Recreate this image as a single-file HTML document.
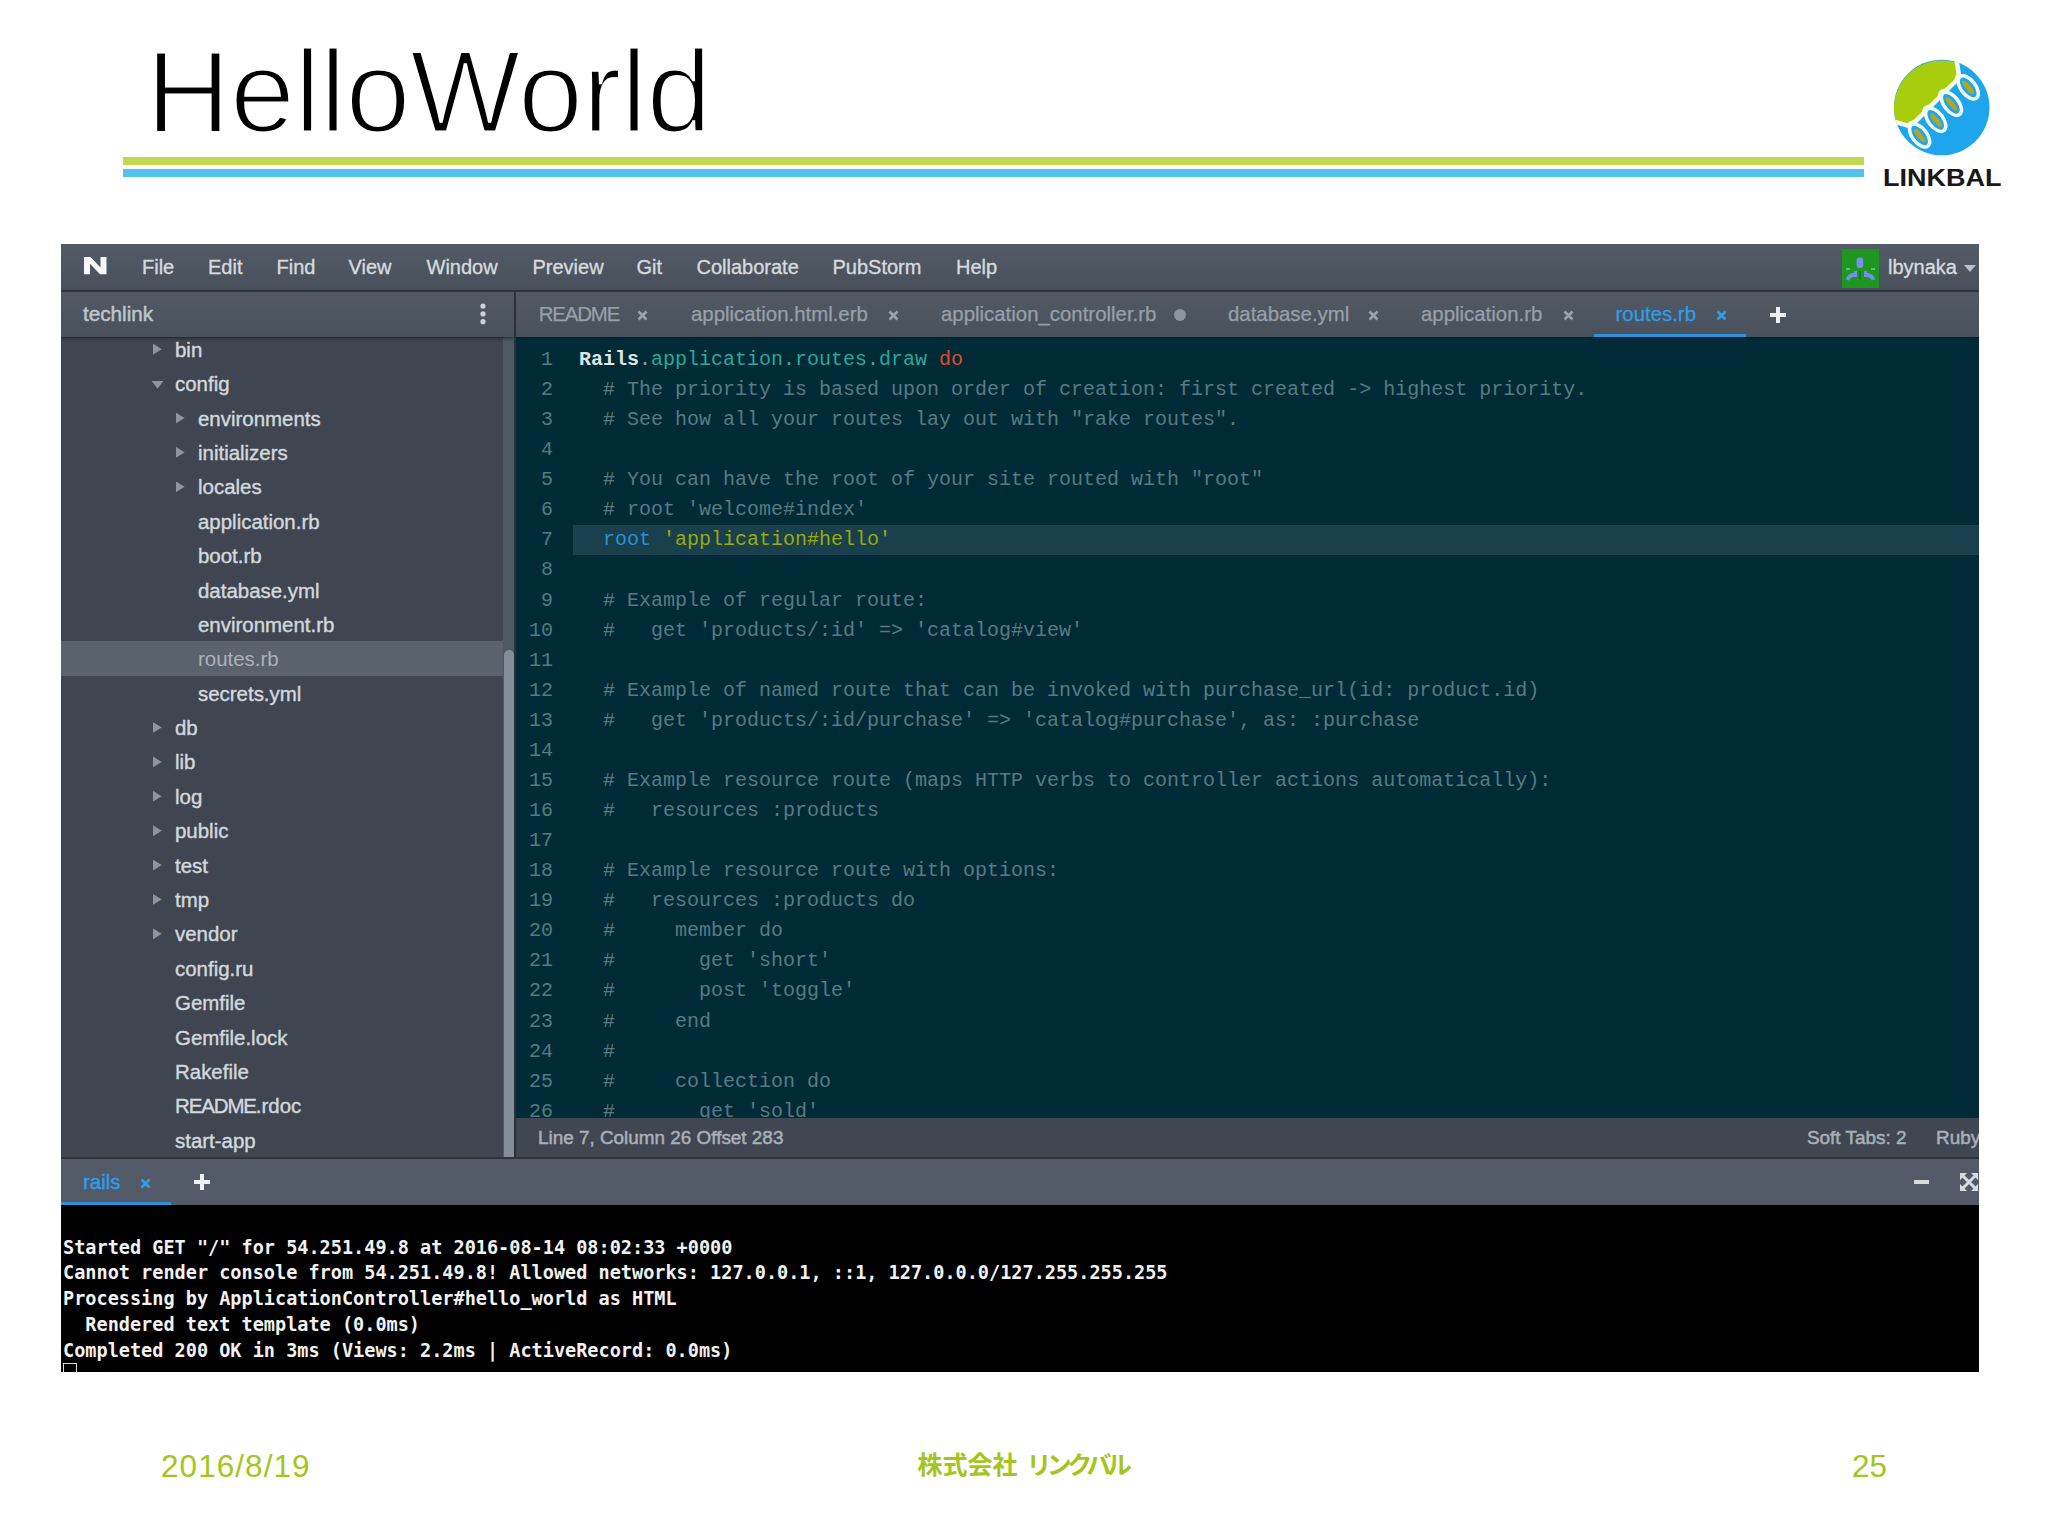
<!DOCTYPE html>
<html lang="ja">
<head>
<meta charset="utf-8">
<title>HelloWorld</title>
<style>
*{margin:0;padding:0;box-sizing:border-box}
html,body{width:2048px;height:1536px;background:#fff;overflow:hidden}
body{position:relative;font-family:"Liberation Sans",sans-serif}
.abs{position:absolute}
#title{position:absolute;left:146px;top:27px;font-size:117px;line-height:130px;color:#000;letter-spacing:-0.5px;white-space:nowrap;-webkit-text-stroke:3.1px #fff}
#gline{position:absolute;left:123px;top:157px;width:1741px;height:8px;background:#c4d94f}
#bline{position:absolute;left:123px;top:169px;width:1741px;height:8px;background:#50c2ee}
#logo{position:absolute;left:1870px;top:50px}
#fdate{position:absolute;left:161px;top:1448px;font-size:31.5px;line-height:36px;color:#a4c51c;letter-spacing:1.05px;white-space:nowrap}
#fco{position:absolute;left:917.5px;top:1447px;font-size:25px;line-height:36px;color:#a4c51c;font-weight:bold;white-space:nowrap;font-family:"Liberation Sans","Noto Sans CJK JP",sans-serif}
#fco .kt{letter-spacing:-4.6px}
#fco .sp{letter-spacing:2px}
#fnum{position:absolute;left:1852px;top:1448px;font-size:31.5px;line-height:36px;color:#a4c51c;white-space:nowrap}

/* IDE */
#ide{position:absolute;left:61px;top:244px;width:1918px;height:1128px;background:#3f4651;overflow:hidden;color:#d4d9de;box-shadow:inset 1px 1px 0 rgba(30,34,40,.55)}
#menubar{position:absolute;left:0;top:0;width:1918px;height:46px;background:linear-gradient(#525b66,#48505b)}
#menubar .mi{position:absolute;top:11px;font-size:20px;line-height:24px;color:#d6dade;white-space:nowrap;-webkit-text-stroke:0.35px #d6dade}
#mline{position:absolute;left:0;top:46px;width:1918px;height:2px;background:#30353d}
#sidehead{position:absolute;left:0;top:48px;width:454px;height:45px;background:linear-gradient(#505964,#49515c)}
#sidehead span{position:absolute;left:22px;top:10px;font-size:20.7px;line-height:24px;color:#bec5cd;-webkit-text-stroke:0.5px #bec5cd}
#vdiv{position:absolute;left:453.3px;top:47px;width:1.7px;height:867px;background:#2c3139;z-index:4}
#tabbar{position:absolute;left:455px;top:48px;width:1463px;height:45px;background:linear-gradient(#505964,#49515c)}
.tab{position:absolute;top:10px;font-size:20.4px;-webkit-text-stroke:0.25px #97a0aa;line-height:24px;color:#97a0aa;white-space:nowrap}
.tab.act{color:#2f9ee8;-webkit-text-stroke:0.25px #2f9ee8}
.tx{position:absolute;top:18px;stroke:#9aa2ac;stroke-width:2.6;fill:none}
.tx.act{stroke:#2f9ee8}
.dot{position:absolute;top:17px;width:12px;height:12px;border-radius:50%;background:#8c949e}
#tabul{position:absolute;left:1078px;top:41.5px;width:152px;height:3.5px;background:#2b93dc}
#hline{position:absolute;left:0;top:92.6px;width:1918px;height:1.4px;background:rgba(10,14,20,.45);z-index:3}
#hshadow{position:absolute;left:0;top:94px;width:454px;height:4px;background:linear-gradient(rgba(0,0,0,.22),rgba(0,0,0,0));z-index:3}
#tree{position:absolute;left:0;top:93px;width:442px;height:821px;background:#3f4651;overflow:hidden}
.trow{position:absolute;left:0;width:442px;height:34.4px}
.trow.sel{background:#5a626d}
.trow span{position:absolute;top:6px;font-size:20.45px;line-height:24px;color:#d3d8dd;white-space:nowrap;-webkit-text-stroke:0.4px #d3d8dd}
.trow.sel span{color:#aab1ba;-webkit-text-stroke:0}
.ar{position:absolute;top:11.8px;width:9px;height:11.2px;background:#8d95a0;clip-path:polygon(0 0,100% 50%,0 100%)}
.ad{position:absolute;top:14.6px;margin-left:0.5px;width:12px;height:8px;background:#8d95a0;clip-path:polygon(0 0,100% 0,50% 100%)}
#strack{position:absolute;left:442px;top:93px;width:12px;height:821px;background:#4f5964}
#sthumb{position:absolute;left:443px;top:406px;width:10px;height:508px;background:#848e9b;border-radius:5px 5px 0 0}
#editor{position:absolute;left:455px;top:93px;width:1463px;height:781px;background:#002b36;overflow:hidden;font-family:"Liberation Mono",monospace}
.cl{position:absolute;left:0;width:1463px;height:30px;font-size:20px;line-height:30px;white-space:pre}
.cl.act .ct{background:#1a3f4d}
.ln{position:absolute;left:0;width:37px;text-align:right;color:#4f7c86}
.ct{position:absolute;left:57px;width:1406px;height:30px;padding-left:6px}
.c{color:#597a83}
.w{color:#dfe5e5;font-weight:bold}
.p{color:#93a1a1}
.t{color:#2aa89c}
.r{color:#e04a30}
.b{color:#2b8fd8}
.g{color:#96ab0c}
#status{position:absolute;left:455px;top:874px;width:1463px;height:39px;background:#404752}
#status span{position:absolute;top:9px;font-size:18.9px;line-height:22px;color:#a9b0b9;white-space:nowrap;-webkit-text-stroke:0.5px #a9b0b9}
#sline{position:absolute;left:0;top:913px;width:1918px;height:2px;background:#30353d}
#ttabs{position:absolute;left:0;top:915px;width:1918px;height:47px;background:#515a66}
#ttabs .rl{position:absolute;left:22px;top:11px;font-size:20.4px;line-height:24px;color:#2f9ee8;-webkit-text-stroke:0.4px #2f9ee8}
#ttul{position:absolute;left:0;top:42.5px;width:110px;height:4px;background:#2b93dc}
#term{position:absolute;left:0;top:961px;width:1918px;height:167px;background:#000;overflow:hidden;font-family:"DejaVu Sans Mono","Liberation Mono",monospace}
.tl{position:absolute;left:2px;font-size:18.55px;line-height:26px;color:#f2f2f2;font-weight:bold;white-space:pre}
#cursor{position:absolute;left:1.5px;top:157.5px;width:14px;height:20px;border:1.5px solid #ddd}
</style>
</head>
<body>
<div id="title">HelloWorld</div>
<div id="gline"></div>
<div id="bline"></div>

<svg id="logo" width="178" height="150" viewBox="0 0 178 150">
<defs><clipPath id="lc"><circle cx="71.7" cy="57.5" r="47.8"/></clipPath><clipPath id="lg"><path d="M86.5 10L20 10L20 72L40.5 77.5L90.5 27Z"/></clipPath></defs>
<g clip-path="url(#lc)">
<rect x="20" y="5" width="104" height="104" fill="#1da6ee"/>
<path d="M86.5 12.9A47.8 47.8 0 0 0 25.9 72L40.5 76.3L89.3 27.5Z" fill="#a8cd0c"/>
<path d="M22 71L40.5 76.3L89.3 27.5L86.2 8" fill="none" stroke="#f8fdea" stroke-width="4.5" stroke-linejoin="round"/>
<g clip-path="url(#lg)">
<ellipse cx="49.6" cy="85.5" rx="11" ry="17.4" transform="rotate(-38 49.6 85.5)" fill="#f8fdea"/>
<ellipse cx="65.7" cy="69.8" rx="11" ry="17.4" transform="rotate(-38 65.7 69.8)" fill="#f8fdea"/>
<ellipse cx="81.4" cy="53.8" rx="11" ry="17.4" transform="rotate(-38 81.4 53.8)" fill="#f8fdea"/>
<ellipse cx="98.2" cy="37.4" rx="11" ry="17.4" transform="rotate(-38 98.2 37.4)" fill="#f8fdea"/>
</g>
<ellipse cx="49.6" cy="85.5" rx="7.3" ry="13.5" transform="rotate(-38 49.6 85.5)" fill="#1da6ee" stroke="#f4fdf4" stroke-width="3.5"/>
<ellipse cx="49.6" cy="85.5" rx="2.7" ry="8.6" transform="rotate(-40 49.6 85.5)" fill="#b5a522"/>
<ellipse cx="65.7" cy="69.8" rx="7.3" ry="13.5" transform="rotate(-38 65.7 69.8)" fill="#1da6ee" stroke="#f4fdf4" stroke-width="3.5"/>
<ellipse cx="65.7" cy="69.8" rx="2.7" ry="8.6" transform="rotate(-40 65.7 69.8)" fill="#b5a522"/>
<ellipse cx="81.4" cy="53.8" rx="7.3" ry="13.5" transform="rotate(-38 81.4 53.8)" fill="#1da6ee" stroke="#f4fdf4" stroke-width="3.5"/>
<ellipse cx="81.4" cy="53.8" rx="2.7" ry="8.6" transform="rotate(-40 81.4 53.8)" fill="#b5a522"/>
<ellipse cx="98.2" cy="37.4" rx="7.3" ry="13.5" transform="rotate(-38 98.2 37.4)" fill="#1da6ee" stroke="#f4fdf4" stroke-width="3.5"/>
<ellipse cx="98.2" cy="37.4" rx="2.7" ry="8.6" transform="rotate(-40 98.2 37.4)" fill="#b5a522"/>
</g>
<text x="13" y="136" font-family="Liberation Sans, sans-serif" font-weight="bold" font-size="23.2" textLength="118.5" lengthAdjust="spacingAndGlyphs" fill="#1a1718">LINKBAL</text>
</svg>

<div id="ide">
  <div id="menubar">
    <svg class="abs" style="left:23px;top:13px" width="24" height="18" viewBox="0 0 24 18"><path d="M0 0H6.5L16.5 10.5V0H22.5V17.2H16L6 6.7V17.2H0Z" fill="#f6f8fa"/></svg>
<span class="mi" style="left:81.0px">File</span>
<span class="mi" style="left:147.0px">Edit</span>
<span class="mi" style="left:215.5px">Find</span>
<span class="mi" style="left:287.5px">View</span>
<span class="mi" style="left:365.5px">Window</span>
<span class="mi" style="left:471.5px">Preview</span>
<span class="mi" style="left:575.5px">Git</span>
<span class="mi" style="left:635.5px">Collaborate</span>
<span class="mi" style="left:771.5px">PubStorm</span>
<span class="mi" style="left:895.0px">Help</span>
    <svg class="abs" style="left:1780.5px;top:5px;filter:blur(0.7px)" width="37" height="39" viewBox="0 0 37 39"><rect width="37" height="39" fill="#1f9620"/><rect x="14.6" y="8.5" width="6.6" height="10.5" rx="2.5" fill="#7391f2"/><path d="M4 30.5Q4.5 24.5 13.5 23.5V27.5Q8 28 7.5 31.5ZM33 30.5Q32.5 24.5 23.500 23.5V27.5Q29 28 29.500 31.500Z" fill="#6f8ff0"/><rect x="12" y="22" width="3" height="6" fill="#6f8ff0"/><rect x="22" y="22" width="3" height="6" fill="#6f8ff0"/><rect x="4" y="19" width="4" height="2" fill="#5fc070"/><rect x="29" y="19" width="4" height="2" fill="#5fc070"/><rect x="17" y="22" width="2" height="8" fill="#187a1c"/></svg>
    <span class="mi" style="left:1827px">lbynaka</span>
    <i class="abs" style="left:1903px;top:21px;width:0;height:0;border-top:7px solid #b9c0c8;border-left:6.5px solid transparent;border-right:6.5px solid transparent"></i>
  </div>
  <div id="mline"></div>
  <div id="sidehead"><span>techlink</span>
    <svg class="abs" style="left:417.7px;top:11px" width="8" height="22" viewBox="0 0 8 22"><circle cx="4" cy="3.1" r="2.6" fill="#cdd2da"/><circle cx="4" cy="10.9" r="2.6" fill="#cdd2da"/><circle cx="4" cy="18.7" r="2.6" fill="#cdd2da"/></svg>
  </div>
  <div id="tabbar">
<span class="tab" style="left:22.8px"><span style="letter-spacing:-1.15px">README</span></span>
<svg class="tx" style="left:120.5px" width="11" height="11" viewBox="0 0 11 11"><path d="M1.5 1.5L9.5 9.5M9.5 1.5L1.5 9.5"/></svg>
<span class="tab" style="left:175.0px">application.html.erb</span>
<svg class="tx" style="left:372.0px" width="11" height="11" viewBox="0 0 11 11"><path d="M1.5 1.5L9.5 9.5M9.5 1.5L1.5 9.5"/></svg>
<span class="tab" style="left:425.0px">application_controller.rb</span>
<i class="dot" style="left:658.0px"></i>
<span class="tab" style="left:712.0px">database.yml</span>
<svg class="tx" style="left:852.0px" width="11" height="11" viewBox="0 0 11 11"><path d="M1.5 1.5L9.5 9.5M9.5 1.5L1.5 9.5"/></svg>
<span class="tab" style="left:905.0px">application.rb</span>
<svg class="tx" style="left:1047.0px" width="11" height="11" viewBox="0 0 11 11"><path d="M1.5 1.5L9.5 9.5M9.5 1.5L1.5 9.5"/></svg>
<span class="tab act" style="left:1099.5px">routes.rb</span>
<svg class="tx act" style="left:1200.0px" width="11" height="11" viewBox="0 0 11 11"><path d="M1.5 1.5L9.5 9.5M9.5 1.5L1.5 9.5"/></svg>
    <svg class="abs" style="left:1254px;top:15px" width="16" height="16" viewBox="0 0 16 16"><path d="M8 0V16M0 8H16" stroke="#eef1f3" stroke-width="4" fill="none"/></svg>
    <div id="tabul"></div>
  </div>
  <div id="vdiv"></div>
  <div id="hline"></div>
  <div id="hshadow"></div>
  <div id="tree">
<div class="trow" style="top:-5.19px"><i class="ar" style="left:91.7px"></i><span style="left:114px">bin</span></div>
<div class="trow" style="top:29.19px"><i class="ad" style="left:90px"></i><span style="left:114px">config</span></div>
<div class="trow" style="top:63.59px"><i class="ar" style="left:114.7px"></i><span style="left:137px">environments</span></div>
<div class="trow" style="top:97.98px"><i class="ar" style="left:114.7px"></i><span style="left:137px">initializers</span></div>
<div class="trow" style="top:132.37px"><i class="ar" style="left:114.7px"></i><span style="left:137px">locales</span></div>
<div class="trow" style="top:166.75px"><span style="left:137px">application.rb</span></div>
<div class="trow" style="top:201.14px"><span style="left:137px">boot.rb</span></div>
<div class="trow" style="top:235.54px"><span style="left:137px">database.yml</span></div>
<div class="trow" style="top:269.92px"><span style="left:137px">environment.rb</span></div>
<div class="trow sel" style="top:304.32px"><span style="left:137px">routes.rb</span></div>
<div class="trow" style="top:338.70px"><span style="left:137px">secrets.yml</span></div>
<div class="trow" style="top:373.10px"><i class="ar" style="left:91.7px"></i><span style="left:114px">db</span></div>
<div class="trow" style="top:407.49px"><i class="ar" style="left:91.7px"></i><span style="left:114px">lib</span></div>
<div class="trow" style="top:441.88px"><i class="ar" style="left:91.7px"></i><span style="left:114px">log</span></div>
<div class="trow" style="top:476.27px"><i class="ar" style="left:91.7px"></i><span style="left:114px">public</span></div>
<div class="trow" style="top:510.65px"><i class="ar" style="left:91.7px"></i><span style="left:114px">test</span></div>
<div class="trow" style="top:545.05px"><i class="ar" style="left:91.7px"></i><span style="left:114px">tmp</span></div>
<div class="trow" style="top:579.43px"><i class="ar" style="left:91.7px"></i><span style="left:114px">vendor</span></div>
<div class="trow" style="top:613.83px"><span style="left:114px">config.ru</span></div>
<div class="trow" style="top:648.21px"><span style="left:114px">Gemfile</span></div>
<div class="trow" style="top:682.61px"><span style="left:114px">Gemfile.lock</span></div>
<div class="trow" style="top:717.00px"><span style="left:114px">Rakefile</span></div>
<div class="trow" style="top:751.38px"><span style="left:114px"><b style="font-weight:normal;letter-spacing:-1.1px">README</b>.rdoc</span></div>
<div class="trow" style="top:785.78px"><span style="left:114px">start-app</span></div>
  </div>
  <div id="strack"></div>
  <div id="sthumb"></div>
  <div id="editor">
<div class="cl" style="top:7.96px"><span class="ln">1</span><span class="ct"><span class="w">Rails</span><span class="p">.</span><span class="t">application.routes.draw</span> <span class="r">do</span></span></div>
<div class="cl" style="top:38.03px"><span class="ln">2</span><span class="ct"><span class="c">  # The priority is based upon order of creation: first created -&gt; highest priority.</span></span></div>
<div class="cl" style="top:68.10px"><span class="ln">3</span><span class="ct"><span class="c">  # See how all your routes lay out with &quot;rake routes&quot;.</span></span></div>
<div class="cl" style="top:98.17px"><span class="ln">4</span><span class="ct"></span></div>
<div class="cl" style="top:128.25px"><span class="ln">5</span><span class="ct"><span class="c">  # You can have the root of your site routed with &quot;root&quot;</span></span></div>
<div class="cl" style="top:158.31px"><span class="ln">6</span><span class="ct"><span class="c">  # root &#x27;welcome#index&#x27;</span></span></div>
<div class="cl act" style="top:188.38px"><span class="ln">7</span><span class="ct">  <span class="b">root</span> <span class="g">'application#hello'</span></span></div>
<div class="cl" style="top:218.45px"><span class="ln">8</span><span class="ct"></span></div>
<div class="cl" style="top:248.52px"><span class="ln">9</span><span class="ct"><span class="c">  # Example of regular route:</span></span></div>
<div class="cl" style="top:278.60px"><span class="ln">10</span><span class="ct"><span class="c">  #   get &#x27;products/:id&#x27; =&gt; &#x27;catalog#view&#x27;</span></span></div>
<div class="cl" style="top:308.66px"><span class="ln">11</span><span class="ct"></span></div>
<div class="cl" style="top:338.73px"><span class="ln">12</span><span class="ct"><span class="c">  # Example of named route that can be invoked with purchase_url(id: product.id)</span></span></div>
<div class="cl" style="top:368.81px"><span class="ln">13</span><span class="ct"><span class="c">  #   get &#x27;products/:id/purchase&#x27; =&gt; &#x27;catalog#purchase&#x27;, as: :purchase</span></span></div>
<div class="cl" style="top:398.88px"><span class="ln">14</span><span class="ct"></span></div>
<div class="cl" style="top:428.94px"><span class="ln">15</span><span class="ct"><span class="c">  # Example resource route (maps HTTP verbs to controller actions automatically):</span></span></div>
<div class="cl" style="top:459.01px"><span class="ln">16</span><span class="ct"><span class="c">  #   resources :products</span></span></div>
<div class="cl" style="top:489.09px"><span class="ln">17</span><span class="ct"></span></div>
<div class="cl" style="top:519.15px"><span class="ln">18</span><span class="ct"><span class="c">  # Example resource route with options:</span></span></div>
<div class="cl" style="top:549.22px"><span class="ln">19</span><span class="ct"><span class="c">  #   resources :products do</span></span></div>
<div class="cl" style="top:579.30px"><span class="ln">20</span><span class="ct"><span class="c">  #     member do</span></span></div>
<div class="cl" style="top:609.37px"><span class="ln">21</span><span class="ct"><span class="c">  #       get &#x27;short&#x27;</span></span></div>
<div class="cl" style="top:639.43px"><span class="ln">22</span><span class="ct"><span class="c">  #       post &#x27;toggle&#x27;</span></span></div>
<div class="cl" style="top:669.50px"><span class="ln">23</span><span class="ct"><span class="c">  #     end</span></span></div>
<div class="cl" style="top:699.58px"><span class="ln">24</span><span class="ct"><span class="c">  #</span></span></div>
<div class="cl" style="top:729.64px"><span class="ln">25</span><span class="ct"><span class="c">  #     collection do</span></span></div>
<div class="cl" style="top:759.71px"><span class="ln">26</span><span class="ct"><span class="c">  #       get &#x27;sold&#x27;</span></span></div>
  </div>
  <div id="status">
    <span style="left:22px">Line 7, Column 26 Offset 283</span>
    <span style="left:1291px">Soft Tabs: 2</span>
    <span style="left:1420px">Ruby</span>
  </div>
  <div id="sline"></div>
  <div id="ttabs">
    <span class="rl">rails</span>
    <svg class="tx act" style="left:79px;top:19px" width="11" height="11" viewBox="0 0 11 11"><path d="M1.5 1.5L9.5 9.5M9.5 1.5L1.5 9.5"/></svg>
    <svg class="abs" style="left:133px;top:15px" width="16" height="16" viewBox="0 0 16 16"><path d="M8 0V16M0 8H16" stroke="#eef1f3" stroke-width="4" fill="none"/></svg>
    <div id="ttul"></div>
    <i class="abs" style="left:1853px;top:21px;width:15px;height:4px;background:#d7dbe0"></i>
    <svg class="abs" style="left:1899px;top:14px" width="18" height="18" viewBox="0 0 18 18"><path d="M2 2L16 16M16 2L2 16" stroke="#d7dbe0" stroke-width="3" fill="none"/><path d="M0 0H7L0 7ZM18 0H11L18 7ZM0 18H7L0 11ZM18 18H11L18 11Z" fill="#d7dbe0"/></svg>
  </div>
  <div id="term">
<div class="tl" style="top:29.70px">Started GET &quot;/&quot; for 54.251.49.8 at 2016-08-14 08:02:33 +0000</div>
<div class="tl" style="top:55.45px">Cannot render console from 54.251.49.8! Allowed networks: 127.0.0.1, ::1, 127.0.0.0/127.255.255.255</div>
<div class="tl" style="top:81.20px">Processing by ApplicationController#hello_world as HTML</div>
<div class="tl" style="top:106.95px">  Rendered text template (0.0ms)</div>
<div class="tl" style="top:132.70px">Completed 200 OK in 3ms (Views: 2.2ms | ActiveRecord: 0.0ms)</div>
    <div id="cursor"></div>
  </div>
</div>

<div id="fdate">2016/8/19</div>
<div id="fco">株式会社<span class="sp"> </span><span class="kt">リンクバル</span></div>
<div id="fnum">25</div>
</body>
</html>
